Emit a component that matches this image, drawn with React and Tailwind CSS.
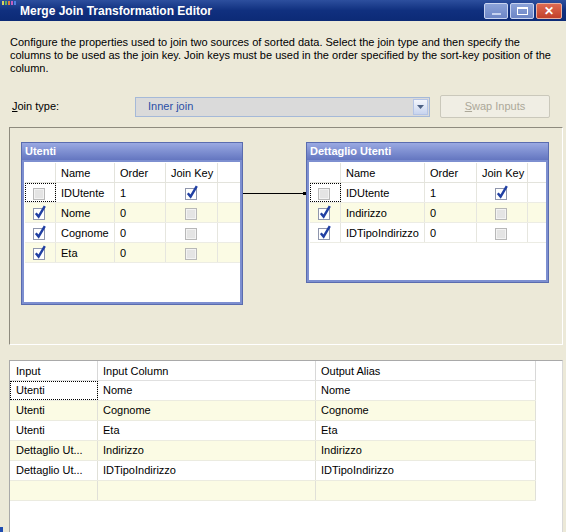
import React from 'react';

const font = { fontFamily: '"Liberation Sans", Arial, sans-serif' };

const Check = ({ checked }) =>
  checked ? (
    <svg width="16" height="16" viewBox="0 0 16 16">
      <rect x="1.5" y="3.5" width="11" height="11" fill="#fff" stroke="#8f96ad" />
      <path d="M3.8 8.2 L6.6 11.6 L12.8 1.2" fill="none" stroke="#2140a3" strokeWidth="2.4" />
    </svg>
  ) : (
    <svg width="16" height="16" viewBox="0 0 16 16">
      <rect x="1.5" y="3.5" width="11" height="11" fill="#f3f3f3" stroke="#b8b8b8" />
      <rect x="3" y="5" width="8" height="8" fill="#e4e4e4" />
    </svg>
  );

function TableBox({ title, cols, rows, className }) {
  return (
    <div className={`absolute border border-[#5a6caf] bg-[#7d8fd0] p-[2px] flex flex-col ${className}`}>
      <div className="h-[17px] -mx-[2px] -mt-[2px] px-[3px] bg-gradient-to-b from-[#9aa9e2] to-[#6476c0] text-white font-bold text-[11px] leading-[17px]">
        {title}
      </div>
      <div className="flex-1 bg-white mt-[2px] pt-[1px] pl-[1px]">
        <div className="flex h-[20px] border-b border-[#e3e3dc]">
          {cols.map((c, i) => (
            <div key={i} style={{ width: c.w }} className="border-r border-[#e3e3dc] pl-[5px] text-[11px] leading-[20px] text-black">
              {c.label}
            </div>
          ))}
        </div>
        {rows.map((r, ri) => (
          <div key={ri} className={`flex h-[20px] border-b border-[#ececE4] ${ri % 2 ? 'bg-[#fbfbe4]' : 'bg-white'}`}>
            <div style={{ width: cols[0].w }} className={`flex items-center justify-center border-r border-[#e6e6df] ${ri === 0 ? 'outline outline-1 outline-dotted outline-black -outline-offset-1' : ''}`}>
              <Check checked={r.on} />
            </div>
            <div style={{ width: cols[1].w }} className="border-r border-[#e6e6df] pl-[5px] text-[11px] leading-[20px]">{r.name}</div>
            <div style={{ width: cols[2].w }} className="border-r border-[#e6e6df] pl-[5px] text-[11px] leading-[20px]">{r.order}</div>
            <div style={{ width: cols[3].w }} className="border-r border-[#e6e6df] flex items-center justify-center">
              <Check checked={r.key} />
            </div>
          </div>
        ))}
      </div>
    </div>
  );
}

const outRows = [
  ['Utenti', 'Nome', 'Nome'],
  ['Utenti', 'Cognome', 'Cognome'],
  ['Utenti', 'Eta', 'Eta'],
  ['Dettaglio Ut...', 'Indirizzo', 'Indirizzo'],
  ['Dettaglio Ut...', 'IDTipoIndirizzo', 'IDTipoIndirizzo'],
  ['', '', ''],
];

export default function App() {
  return (
    <div style={font} className="w-[566px] h-[532px] bg-[#ece9d8] overflow-hidden relative flex flex-col text-black">
      {/* Title bar */}
      <div className="h-[21px] flex items-center bg-gradient-to-b from-[#2d4f9e] via-[#10307f] to-[#0c2a76] pl-[2px] pr-[4px]">
        <div className="w-[16px] h-[14px] self-start mt-[1px] flex gap-[1px]">
          <div className="w-[2px] h-[4px] bg-[#d8d060]" />
          <div className="w-[2px] h-[4px] bg-[#60b060]" />
          <div className="w-[2px] h-[4px] bg-[#e08040]" />
          <div className="w-[2px] h-[4px] bg-[#c060c0]" />
          <div className="w-[2px] h-[4px] bg-[#5080e0]" />
        </div>
        <div className="ml-[2px] text-white font-bold text-[12px]">Merge Join Transformation Editor</div>
        <div className="ml-auto flex gap-[2px]">
          <div className="w-[24px] h-[16px] rounded-[2px] border border-[#c9d4f0] bg-gradient-to-b from-[#8ba2d8] to-[#6d86c6] flex items-end justify-center pb-[3px]">
            <div className="w-[9px] h-[2px] bg-[#c6d2f0]" />
          </div>
          <div className="w-[24px] h-[16px] rounded-[2px] border border-[#c9d4f0] bg-gradient-to-b from-[#8ba2d8] to-[#6d86c6] flex items-center justify-center">
            <div className="w-[11px] h-[8px] border border-white border-t-2" />
          </div>
          <div className="w-[26px] h-[16px] rounded-[2px] border border-[#e8b0a0] bg-gradient-to-b from-[#de6a52] to-[#c2402a] flex items-center justify-center text-white font-bold text-[12px] leading-none">
            ✕
          </div>
        </div>
      </div>

      {/* Description */}
      <div className="mt-[15px] px-[10px] text-[11px] leading-[13px]">
        Configure the properties used to join two sources of sorted data. Select the join type and then specify the
        <br />
        columns to be used as the join key. Join keys must be used in the order specified by the sort-key position of the
        <br />
        column.
      </div>

      {/* Join type row */}
      <div className="mt-[20px] flex items-center h-[23px]">
        <div className="w-[135px] pl-[12px] text-[11px]">
          <span className="underline">J</span>oin type:
        </div>
        <div className="w-[295px] h-[20px] border border-[#a5b9d8] bg-[#dadada] flex items-center">
          <span className="pl-[12px] text-[11px] text-[#2b4fa6] flex-1">Inner join</span>
          <div className="w-[15px] h-[16px] mr-[1px] border border-[#b4c4e6] bg-gradient-to-b from-[#f4f6fc] to-[#c8d4ee] flex items-center justify-center">
            <svg width="7" height="4" viewBox="0 0 7 4"><path d="M0 0 H7 L3.5 4 Z" fill="#4d6185" /></svg>
          </div>
        </div>
        <div className="ml-[10px] w-[110px] h-[23px] border border-[#cac8bb] rounded-[2px] bg-[#f0eee4] flex items-center justify-center text-[11px] text-[#aca899]">
          <span className="underline">S</span>wap Inputs
        </div>
      </div>

      {/* Designer panel */}
      <div className="mt-[9px] ml-[9px] w-[554px] h-[218px] relative border-t border-l border-[#8e8b7e] border-r border-b border-r-[#ffffff] border-b-[#ffffff]">
        <TableBox
          title="Utenti"
          className="left-[11px] top-[14px] w-[222px] h-[163px]"
          cols={[{ w: 31 }, { w: 59, label: 'Name' }, { w: 51, label: 'Order' }, { w: 52, label: 'Join Key' }]}
          rows={[
            { on: false, name: 'IDUtente', order: '1', key: true },
            { on: true, name: 'Nome', order: '0', key: false },
            { on: true, name: 'Cognome', order: '0', key: false },
            { on: true, name: 'Eta', order: '0', key: false },
          ]}
        />
        <div className="absolute left-[233px] top-[65px] w-[62px] h-px bg-black" />
        <div className="absolute left-[293px] top-[64px] w-[3px] h-[3px] bg-black" />
        <TableBox
          title="Dettaglio Utenti"
          className="left-[296px] top-[14px] w-[243px] h-[141px]"
          cols={[{ w: 31 }, { w: 84, label: 'Name' }, { w: 52, label: 'Order' }, { w: 51, label: 'Join Key' }]}
          rows={[
            { on: false, name: 'IDUtente', order: '1', key: true },
            { on: true, name: 'Indirizzo', order: '0', key: false },
            { on: true, name: 'IDTipoIndirizzo', order: '0', key: false },
          ]}
        />
      </div>

      {/* Output grid */}
      <div className="mt-[15px] ml-[9px] w-[554px] flex-1 bg-white border-t border-l border-[#a9a9a9] border-r border-r-[#d8d8d8]">
        <div className="w-[526px]">
          <div className="flex h-[20px] border-b border-[#e0e0e0] text-[11px] leading-[20px]">
            <div className="w-[88px] pl-[6px] border-r border-[#d8d8d8]">Input</div>
            <div className="w-[218px] pl-[5px] border-r border-[#d8d8d8]">Input Column</div>
            <div className="w-[220px] pl-[5px] border-r border-[#d8d8d8]">Output Alias</div>
          </div>
          {outRows.map((r, i) => (
            <div key={i} className={`flex h-[20px] border-b border-[#ebebe0] text-[11px] leading-[19px] ${i % 2 ? 'bg-[#fbfbe4]' : 'bg-white'}`}>
              <div className={`w-[88px] pl-[6px] border-r border-[#e0e0d8] ${i === 0 ? 'outline outline-1 outline-dotted outline-black -outline-offset-1' : ''}`}>{r[0]}</div>
              <div className="w-[218px] pl-[5px] border-r border-[#e0e0d8]">{r[1]}</div>
              <div className="w-[220px] pl-[5px] border-r border-[#e0e0d8]">{r[2]}</div>
            </div>
          ))}
        </div>
      </div>
      <div className="absolute left-0 bottom-0 w-[3px] h-[5px] bg-[#1f4cb0]" />
    </div>
  );
}
